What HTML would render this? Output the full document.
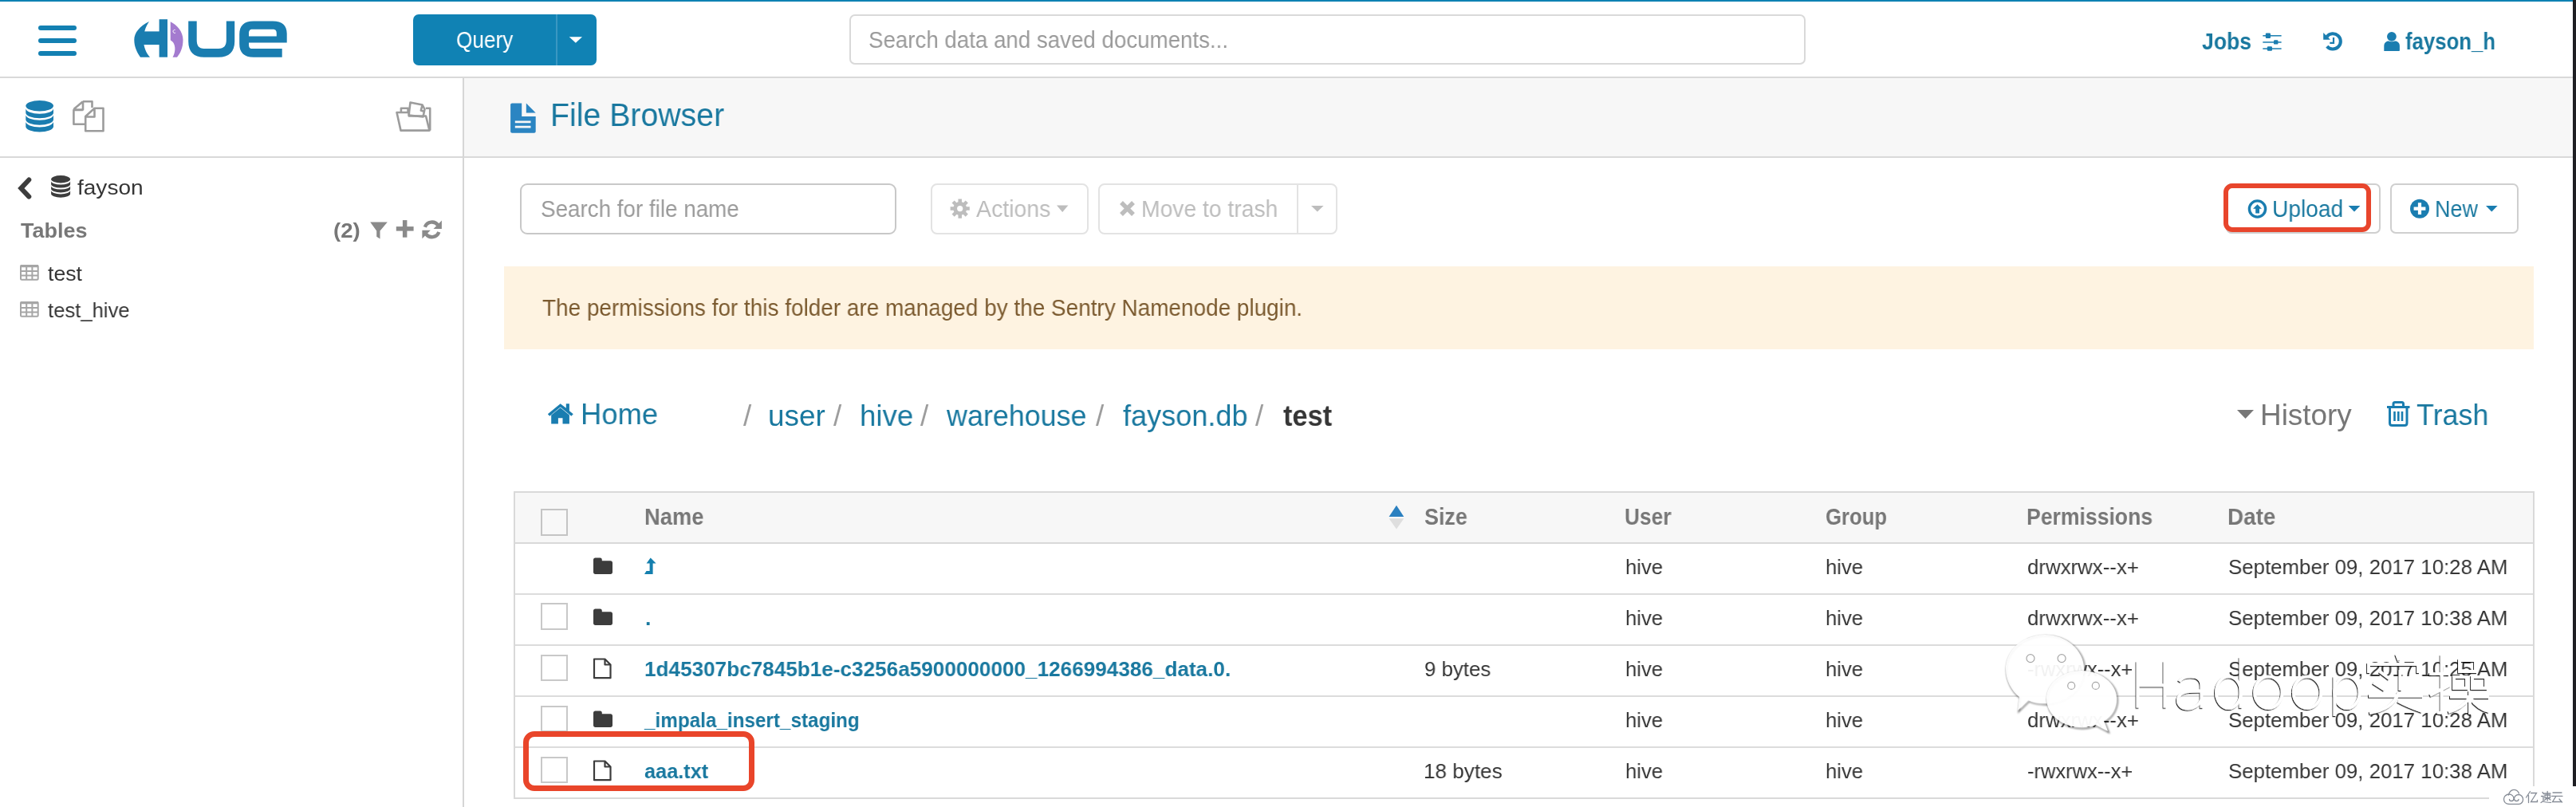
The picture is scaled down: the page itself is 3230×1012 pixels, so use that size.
<!DOCTYPE html>
<html><head><meta charset="utf-8">
<style>
html,body{margin:0;padding:0;width:3230px;height:1012px;overflow:hidden;background:#fff;font-family:"Liberation Sans",sans-serif;}
.a{position:absolute;box-sizing:border-box;}
.t{position:absolute;line-height:60px;height:60px;white-space:pre;transform-origin:0 0;will-change:transform;}
svg{position:absolute;overflow:visible;}
</style></head><body>
<!-- top blue line -->
<div class="a" style="left:0;top:0;width:3226px;height:2px;background:#0e82b3"></div>
<!-- header bottom border -->
<div class="a" style="left:0;top:96px;width:3226px;height:2px;background:#d9d9d9"></div>
<!-- hamburger -->
<div class="a" style="left:48px;top:32px;width:48px;height:6px;border-radius:3px;background:#1380b2"></div>
<div class="a" style="left:48px;top:48px;width:48px;height:6px;border-radius:3px;background:#1380b2"></div>
<div class="a" style="left:48px;top:64px;width:48px;height:6px;border-radius:3px;background:#1380b2"></div>
<!-- logo -->
<svg style="left:0;top:0" width="400" height="96" viewBox="0 0 400 96">
  <g fill="#1a7db0">
    <!-- H left crescent + bar + stem -->
    <path d="M187 27 C175 33 168.3 41 168.3 50 C168.3 59 172 66 176 71.7 L188 71.7 C183 66 180 59 180 50 C180 42 182 34 187 27 Z"/>
    <rect x="180" y="39.4" width="22" height="16.7"/>
    <rect x="199.6" y="24.2" width="10.4" height="47.5"/>
    <!-- U -->
    <path d="M236.2 26.4 H246.7 V50 C246.7 57 249 61 256 61 H274 C281 61 283.8 57 283.8 50 V26.4 H294.2 V52 C294.2 65 287 71.7 274 71.7 H256 C243 71.7 236.2 65 236.2 52 Z"/>
    <!-- e -->
    <path d="M318 26.4 H342 C354 26.4 359.7 32 359.7 42 V53.6 H312 V56 C312 59 313 61 316 61 H353.7 V71.7 H318 C306 71.7 300.2 66 300.2 55 V43 C300.2 32 306 26.4 318 26.4 Z M316 36.8 C313 36.8 312 39 312 42 V45.5 H346.8 V42 C346.8 39 346 36.8 342 36.8 Z" fill-rule="evenodd"/>
  </g>
  <path fill="#a47bcf" d="M213.75 27.3 C222 31 229.5 40 229.5 50 C229.5 60 226 67 222 71.7 L216.5 71.7 C220 66 220.5 58 217 53 C215 51 213.75 50.5 213.75 49.9 Z"/>
  <path d="M219.6 37.5 a2 2 0 1 0 0.5 3.6" stroke="#fff" stroke-width="1" fill="none"/>
</svg>
<!-- Query button -->
<div class="a" style="left:518px;top:18px;width:230px;height:64px;border-radius:7px;background:#1082b4"></div>
<div class="a" style="left:697px;top:18px;width:2px;height:64px;background:#3a97c2"></div>
<svg style="left:0;top:0" width="1" height="1"><path d="M713.7 46.2 H730 L721.85 53.8 Z" fill="#fff"/></svg>
<!-- global search -->
<div class="a" style="left:1065px;top:18px;width:1199px;height:63px;border:2px solid #d9d9d9;border-radius:7px;background:#fff"></div>
<!-- jobs sliders icon -->
<svg style="left:0;top:0" width="1" height="1" fill="#1a7db0">
  <rect x="2837.3" y="44.05" width="23.3" height="1.5"/><rect x="2840.8" y="41.6" width="6.2" height="6.3" rx="1.2"/>
  <rect x="2837.3" y="52.2" width="23.3" height="1.5"/><rect x="2851" y="50.2" width="5.4" height="5.4" rx="1.2"/>
  <rect x="2837.3" y="60.3" width="23.3" height="1.5"/><rect x="2842.8" y="58.3" width="6.2" height="5.5" rx="1.2"/>
</svg>
<!-- history icon -->
<svg style="left:0;top:0" width="1" height="1">
  <path d="M2917.6 45.9 A9.65 9.65 0 1 1 2917.8 58.1" stroke="#1a7db0" stroke-width="4.1" fill="none"/>
  <path d="M2913.2 41.1 L2913.2 49.8 L2922 49.8 Z" fill="#1a7db0"/>
  <path d="M2926 47.1 V53.9 H2921.3" stroke="#1a7db0" stroke-width="2.2" fill="none"/>
</svg>
<!-- user icon -->
<svg style="left:0;top:0" width="1" height="1" fill="#1a7db0">
  <path d="M2989.3 63.9 V57.5 C2989.3 53.8 2992 51.4 2995 51.4 H3003.2 C3006.2 51.4 3008.9 53.8 3008.9 57.5 V62.9 C3008.9 63.5 3008.5 63.9 3008 63.9 Z"/>
  <circle cx="2998.9" cy="45.8" r="6.5" fill="#fff"/>
  <circle cx="2998.9" cy="45.8" r="5.9"/>
</svg>

<!-- sidebar -->
<div class="a" style="left:580px;top:98px;width:2px;height:914px;background:#d6d6d6"></div>
<div class="a" style="left:0;top:196px;width:580px;height:2px;background:#d9d9d9"></div>
<!-- db icon blue -->
<svg style="left:0;top:0" width="1" height="1" fill="#1a7db0">
<ellipse cx="49.65" cy="132.70000000000002" rx="17.35" ry="6.8"/>
<path d="M32.3 136 A17.35 6.8 0 0 0 67 136 V141.4 A17.35 6.8 0 0 1 32.3 141.4 Z"/>
<path d="M32.3 144 A17.35 6.8 0 0 0 67 144 V150 A17.35 6.8 0 0 1 32.3 150 Z"/>
<path d="M32.3 152.6 A17.35 6.8 0 0 0 67 152.6 V158.7 A17.35 6.8 0 0 1 32.3 158.7 Z"/>
</svg>
<!-- copy icon gray -->
<svg style="left:0;top:0" width="1" height="1" fill="none" stroke="#9c9c9c" stroke-width="2.6" stroke-linejoin="round">
  <path d="M104 127.2 H115.5 V135 M103.8 138 L92.4 138 V155.8 H106 M104 127.2 L92.4 137 M104 127.2 V137.5 H92.4"/>
  <path d="M118.5 135.8 H129.5 V164.2 H107.2 V146 L118.5 135.8 Z M118.5 135.8 V146.5 H107.2"/>
</svg>
<!-- folder-open icon gray -->
<svg style="left:0;top:0" width="1" height="1" fill="none" stroke="#9c9c9c" stroke-width="2.6" stroke-linejoin="round">
  <path d="M512.8 142.3 L514.5 128.5 L529.6 131.5 L532.5 137 L530.5 146.5 L512.8 144.5 Z"/>
  <path d="M529.6 131.5 L527.8 138.5 L532.5 140"/>
  <path d="M502.9 140.5 V135.7 H511.6 V140.5"/>
  <path d="M497.5 141 H512.8 V145.5 H534 L538.5 163.6 H502.5 Z"/>
  <path d="M533.8 135.7 H539.2 V163.6"/>
</svg>

<!-- sidebar content -->
<svg style="left:0;top:0" width="1" height="1">
  <path d="M36.3 225.5 L26.3 236.1 L36.3 246.6" stroke="#3d3d3d" stroke-width="6" fill="none" stroke-linejoin="miter" stroke-linecap="round"/>
</svg>
<svg style="left:0;top:0" width="1" height="1" fill="#3d3d3d">
<ellipse cx="76.1" cy="224.7" rx="12.0" ry="4.7"/>
<path d="M64.1 226.9 A12.0 4.7 0 0 0 88.1 226.9 V230.9 A12.0 4.7 0 0 1 64.1 230.9 Z"/>
<path d="M64.1 232.9 A12.0 4.7 0 0 0 88.1 232.9 V236.8 A12.0 4.7 0 0 1 64.1 236.8 Z"/>
<path d="M64.1 238.8 A12.0 4.7 0 0 0 88.1 238.8 V243 A12.0 4.7 0 0 1 64.1 243 Z"/>
</svg>
<!-- filter plus refresh -->
<svg style="left:0;top:0" width="1" height="1" fill="#8a8a8a">
  <path d="M464.2 278.5 H485.8 L476.5 289.5 V299.6 L472.2 296.8 V289.5 Z"/>
  <rect x="496.8" y="284.1" width="21.8" height="5.5"/><rect x="504.9" y="276.1" width="5.5" height="21.6"/>
</svg>
<svg style="left:0;top:0" width="1" height="1" fill="none" stroke="#8a8a8a" stroke-width="4.4">
  <path d="M532.86 284.72 A9.3 9.3 0 0 1 549.22 282.57"/>
  <path d="M550.34 291.08 A9.3 9.3 0 0 1 533.98 293.23"/>
  <path d="M553.9 276.6 V287 H543.5 Z" fill="#8a8a8a" stroke="none"/>
  <path d="M529.4 299.3 V288.8 H539.8 Z" fill="#8a8a8a" stroke="none"/>
</svg>
<!-- table icons -->
<svg style="left:0;top:0" width="1" height="1" fill="none" stroke="#a6a6a6" stroke-width="2">
  <rect x="26" y="333" width="21.7" height="17.8" rx="1.5"/>
  <path d="M26 339.9 H47.7 M26 345.4 H47.7 M33.2 334 V350.8 M40.4 334 V350.8"/>
  <rect x="25.5" y="332" width="22.7" height="3.2" fill="#a6a6a6" stroke="none" rx="1"/>
  <rect x="26" y="379" width="21.7" height="17.8" rx="1.5"/>
  <path d="M26 385.9 H47.7 M26 391.4 H47.7 M33.2 380 V396.8 M40.4 380 V396.8"/>
  <rect x="25.5" y="378" width="22.7" height="3.2" fill="#a6a6a6" stroke="none" rx="1"/>
</svg>
<!-- main panel header -->
<div class="a" style="left:582px;top:98px;width:2644px;height:98px;background:#f7f7f7"></div>
<div class="a" style="left:582px;top:196px;width:2644px;height:2px;background:#d9d9d9"></div>
<svg style="left:0;top:0" width="1" height="1" fill="#2b85c2">
  <path d="M642.1 129.6 H654.2 V145.9 H671.7 V164.7 C671.7 165.9 670.9 166.7 669.7 166.7 H642.1 C640.9 166.7 640.1 165.9 640.1 164.7 V131.6 C640.1 130.4 640.9 129.6 642.1 129.6 Z M645.8 151.5 V154.3 H665.5 V151.5 Z M645.8 157.7 V160.5 H665.5 V157.7 Z" fill-rule="evenodd"/>
  <path d="M659.8 129.6 L671.7 141.4 H659.8 Z"/>
</svg>

<!-- toolbar -->
<div class="a" style="left:652px;top:230px;width:472px;height:64px;border:2px solid #c8c8c8;border-radius:9px;background:#fff"></div>
<div class="a" style="left:1167px;top:230px;width:198px;height:64px;border:2px solid #e3e3e3;border-radius:8px;background:#fff"></div>
<svg style="left:0;top:0" width="1" height="1" fill="#bdbdbd">
  <circle cx="1203.7" cy="261.6" r="8.5"/>
  <g stroke="#bdbdbd" stroke-width="4.5">
    <path d="M1203.7 249.5 V273.7 M1191.6 261.6 H1215.8 M1195.1 253 L1212.3 270.2 M1212.3 253 L1195.1 270.2"/>
  </g>
  <circle cx="1203.7" cy="261.6" r="3.6" fill="#fff"/>
  <path d="M1325 257.4 H1339.4 L1332.2 266 Z"/>
</svg>
<div class="a" style="left:1377px;top:230px;width:300px;height:64px;border:2px solid #e3e3e3;border-radius:8px;background:#fff"></div>
<div class="a" style="left:1625.5px;top:230px;width:2px;height:64px;background:#e3e3e3"></div>
<svg style="left:0;top:0" width="1" height="1" fill="#bdbdbd">
  <path d="M1406 254 L1421 269 M1421 254 L1406 269" stroke="#bdbdbd" stroke-width="5.5"/>
  <path d="M1644 258 H1659.6 L1651.8 265.5 Z"/>
</svg>
<!-- upload & new -->
<div class="a" style="left:2791px;top:230px;width:194px;height:63px;border:2px solid #cfcfcf;border-radius:7px;background:#fff"></div>
<div class="a" style="left:2997px;top:230px;width:161px;height:63px;border:2px solid #cfcfcf;border-radius:7px;background:#fff"></div>
<svg style="left:0;top:0" width="1" height="1">
  <circle cx="2830.5" cy="262" r="10.1" fill="none" stroke="#1a7db0" stroke-width="3.4"/>
  <path d="M2830.5 256.2 L2836 261.7 H2833 V267.6 H2828.2 V261.7 H2825 Z" fill="#1a7db0"/>
  <path d="M2944.6 258 H2959.4 L2952 265.5 Z" fill="#1a7db0"/>
  <circle cx="3034" cy="261.7" r="12" fill="#1a7db0"/>
  <path d="M3034 254.3 V269.1 M3026.6 261.7 H3041.4" stroke="#fff" stroke-width="4.2"/>
  <path d="M3117 258 H3131.6 L3124.3 265.5 Z" fill="#1a7db0"/>
</svg>
<div class="a" style="left:2788px;top:230px;width:185px;height:60.5px;border:6px solid #e8452c;border-radius:11px"></div>

<!-- banner -->
<div class="a" style="left:632px;top:334px;width:2545px;height:104px;background:#fef3e1"></div>

<!-- breadcrumb icons -->
<svg style="left:0;top:0" width="1" height="1" fill="#1a7db0">
  <path d="M702.7 506.2 L686.8 519.3 L689.2 521.8 L702.7 510.6 L716.3 521.8 L718.8 519.3 L713.9 515.2 V506.2 H709.8 V511.8 Z"/>
  <path d="M691.2 520.6 L702.7 511.3 L713.9 520.6 V531.6 H705.5 V524.2 H699.9 V531.6 H691.2 Z"/>
</svg>
<svg style="left:0;top:0" width="1" height="1" fill="#777">
  <path d="M2805 514 H2826 L2815.5 525 Z"/>
</svg>
<svg style="left:0;top:0" width="1" height="1" fill="none" stroke="#1a7db0" stroke-width="3">
  <path d="M2993 510.5 H3021.5"/>
  <path d="M3001 510 V506.5 C3001 505 3002 504.5 3003 504.5 H3011.5 C3012.5 504.5 3013.5 505 3013.5 506.5 V510"/>
  <path d="M2996.5 511 V530.5 C2996.5 532.5 2997.5 533.5 2999.5 533.5 H3015 C3017 533.5 3018 532.5 3018 530.5 V511"/>
  <path d="M3002.5 516 V528 M3007.3 516 V528 M3012 516 V528" stroke-width="2.6"/>
</svg>

<!-- table -->
<div class="a" style="left:644px;top:616px;width:2534px;height:386px;border:2px solid #d9d9d9;background:#fff"></div>
<div class="a" style="left:646px;top:618px;width:2530px;height:62px;background:#f7f7f7"></div>
<div class="a" style="left:646px;top:680px;width:2530px;height:2px;background:#d9d9d9"></div>
<div class="a" style="left:646px;top:744px;width:2530px;height:2px;background:#dcdcdc"></div>
<div class="a" style="left:646px;top:808px;width:2530px;height:2px;background:#dcdcdc"></div>
<div class="a" style="left:646px;top:872px;width:2530px;height:2px;background:#dcdcdc"></div>
<div class="a" style="left:646px;top:936px;width:2530px;height:2px;background:#dcdcdc"></div>
<!-- checkboxes -->
<div class="a" style="left:678px;top:638px;width:34px;height:34px;border:2px solid #c4c4c4;background:#f8f8f8"></div>
<div class="a" style="left:678px;top:756px;width:34px;height:33.5px;border:2px solid #c8c8c8;background:#fff"></div>
<div class="a" style="left:678px;top:820.5px;width:34px;height:33.5px;border:2px solid #c8c8c8;background:#fff"></div>
<div class="a" style="left:678px;top:884.5px;width:34px;height:33.5px;border:2px solid #c8c8c8;background:#fff"></div>
<div class="a" style="left:678px;top:948.5px;width:34px;height:33.5px;border:2px solid #c8c8c8;background:#fff"></div>
<!-- sort icon -->
<svg style="left:0;top:0" width="1" height="1">
  <path d="M1741.6 648 L1751 633.7 L1760.3 648 Z" fill="#2b80c0"/>
  <path d="M1741.6 650.3 L1760.3 650.3 L1751 663.5 Z" fill="#dedede"/>
</svg>
<!-- row icons -->
<svg style="left:0;top:0" width="1" height="1" fill="#3c3c3c">
  <path id="fold" d="M746.5 699.6 H752.5 C754 699.6 754.8 700.5 754.8 702 V703.3 H765.5 C767 703.3 768 704.3 768 705.8 V717.5 C768 719 767 720 765.5 720 H746.5 C745 720 744 719 744 717.5 V702 C744 700.5 745 699.6 746.5 699.6 Z"/>
  <use href="#fold" y="64"/>
  <use href="#fold" y="192"/>
</svg>
<svg style="left:0;top:0" width="1" height="1">
  <path d="M815.7 699.6 L822.6 706.5 H818.6 V720 H808 L810.5 716 H814.6 V706.5 H810.6 Z" fill="#147fae"/>
</svg>
<svg style="left:0;top:0" width="1" height="1" fill="none" stroke="#3c3c3c" stroke-width="2.2" stroke-linejoin="round">
  <path id="file" d="M745 826.5 H758.5 L765.5 833.5 V850.2 H745 Z M758.5 826.5 V833.5 H765.5"/>
  <use href="#file" y="128"/>
</svg>
<!-- red annotation around aaa.txt -->
<div class="a" style="left:655.5px;top:917px;width:290.5px;height:74.5px;border:7px solid #e9452a;border-radius:14px"></div>

<div class="t" style="left:572.09px;top:20.06px;font-size:28.7px;font-weight:400;color:#ffffff;transform:scaleX(0.9130);">Query</div>
<div class="t" style="left:1088.93px;top:20.06px;font-size:28.7px;font-weight:400;color:#9a9a9a;transform:scaleX(0.9653);">Search data and saved documents...</div>
<div class="t" style="left:2761.07px;top:21.76px;font-size:28.7px;font-weight:700;color:#19789f;transform:scaleX(0.9262);">Jobs</div>
<div class="t" style="left:3016.30px;top:21.56px;font-size:28.7px;font-weight:700;color:#19789f;transform:scaleX(0.8968);">fayson_h</div>
<div class="t" style="left:96.80px;top:204.77px;font-size:26.65px;font-weight:400;color:#363636;transform:scaleX(1.0519);">fayson</div>
<div class="t" style="left:26.00px;top:259.07px;font-size:26.65px;font-weight:700;color:#777777;transform:scaleX(1.0123);">Tables</div>
<div class="t" style="left:417.97px;top:259.27px;font-size:26.65px;font-weight:700;color:#777777;transform:scaleX(1.0323);">(2)</div>
<div class="t" style="left:60.10px;top:313.07px;font-size:26.65px;font-weight:400;color:#363636;transform:scaleX(0.9977);">test</div>
<div class="t" style="left:60.00px;top:359.07px;font-size:26.65px;font-weight:400;color:#363636;transform:scaleX(0.9623);">test_hive</div>
<div class="t" style="left:690.13px;top:113.89px;font-size:41.0px;font-weight:400;color:#19789f;transform:scaleX(0.9576);">File Browser</div>
<div class="t" style="left:678.23px;top:232.06px;font-size:28.7px;font-weight:400;color:#9a9a9a;transform:scaleX(0.9690);">Search for file name</div>
<div class="t" style="left:1223.70px;top:232.06px;font-size:28.7px;font-weight:400;color:#bdbdbd;transform:scaleX(0.9925);">Actions</div>
<div class="t" style="left:1430.93px;top:232.06px;font-size:28.7px;font-weight:400;color:#bdbdbd;transform:scaleX(0.9859);">Move to trash</div>
<div class="t" style="left:2848.74px;top:232.06px;font-size:28.7px;font-weight:400;color:#19789f;transform:scaleX(0.9805);">Upload</div>
<div class="t" style="left:3053.12px;top:232.06px;font-size:28.7px;font-weight:400;color:#19789f;transform:scaleX(0.9393);">New</div>
<div class="t" style="left:679.93px;top:356.46px;font-size:28.7px;font-weight:400;color:#7b5a2f;transform:scaleX(0.9735);">The permissions for this folder are managed by the Sentry Namenode plugin.</div>
<div class="t" style="left:728.24px;top:489.91px;font-size:36.9px;font-weight:400;color:#19789f;transform:scaleX(0.9851);">Home</div>
<div class="t" style="left:932.00px;top:492.41px;font-size:36.9px;font-weight:400;color:#9d9d9d;transform:scaleX(1.0000);">/</div>
<div class="t" style="left:1045.00px;top:492.41px;font-size:36.9px;font-weight:400;color:#9d9d9d;transform:scaleX(1.0000);">/</div>
<div class="t" style="left:1154.00px;top:492.41px;font-size:36.9px;font-weight:400;color:#9d9d9d;transform:scaleX(1.0000);">/</div>
<div class="t" style="left:1373.70px;top:492.41px;font-size:36.9px;font-weight:400;color:#9d9d9d;transform:scaleX(1.0000);">/</div>
<div class="t" style="left:1574.00px;top:492.41px;font-size:36.9px;font-weight:400;color:#9d9d9d;transform:scaleX(1.0000);">/</div>
<div class="t" style="left:963.00px;top:492.41px;font-size:36.9px;font-weight:400;color:#19789f;transform:scaleX(1.0000);">user</div>
<div class="t" style="left:1077.52px;top:492.41px;font-size:36.9px;font-weight:400;color:#19789f;transform:scaleX(0.9922);">hive</div>
<div class="t" style="left:1187.00px;top:492.41px;font-size:36.9px;font-weight:400;color:#19789f;transform:scaleX(0.9721);">warehouse</div>
<div class="t" style="left:1407.50px;top:492.41px;font-size:36.9px;font-weight:400;color:#19789f;transform:scaleX(0.9780);">fayson.db</div>
<div class="t" style="left:1609.00px;top:492.41px;font-size:36.9px;font-weight:700;color:#363636;transform:scaleX(0.9323);">test</div>
<div class="t" style="left:2833.61px;top:490.71px;font-size:36.9px;font-weight:400;color:#777777;transform:scaleX(0.9982);">History</div>
<div class="t" style="left:3030.03px;top:490.71px;font-size:36.9px;font-weight:400;color:#19789f;transform:scaleX(0.9711);">Trash</div>
<div class="t" style="left:807.90px;top:618.26px;font-size:28.7px;font-weight:700;color:#777777;transform:scaleX(0.9520);">Name</div>
<div class="t" style="left:1785.76px;top:618.26px;font-size:28.7px;font-weight:700;color:#777777;transform:scaleX(0.9375);">Size</div>
<div class="t" style="left:2037.17px;top:618.26px;font-size:28.7px;font-weight:700;color:#777777;transform:scaleX(0.9145);">User</div>
<div class="t" style="left:2289.10px;top:618.26px;font-size:28.7px;font-weight:700;color:#777777;transform:scaleX(0.8952);">Group</div>
<div class="t" style="left:2541.15px;top:618.26px;font-size:28.7px;font-weight:700;color:#777777;transform:scaleX(0.9262);">Permissions</div>
<div class="t" style="left:2792.66px;top:618.26px;font-size:28.7px;font-weight:700;color:#777777;transform:scaleX(0.9695);">Date</div>
<div class="t" style="left:2037.97px;top:680.97px;font-size:26.65px;font-weight:400;color:#363636;transform:scaleX(0.9630);">hive</div>
<div class="t" style="left:2289.27px;top:680.97px;font-size:26.65px;font-weight:400;color:#363636;transform:scaleX(0.9630);">hive</div>
<div class="t" style="left:2542.03px;top:680.97px;font-size:26.65px;font-weight:400;color:#363636;transform:scaleX(0.9697);">drwxrwx--x+</div>
<div class="t" style="left:2793.63px;top:680.97px;font-size:26.65px;font-weight:400;color:#363636;transform:scaleX(0.9696);">September 09, 2017 10:28 AM</div>
<div class="t" style="left:2037.97px;top:744.97px;font-size:26.65px;font-weight:400;color:#363636;transform:scaleX(0.9630);">hive</div>
<div class="t" style="left:2289.27px;top:744.97px;font-size:26.65px;font-weight:400;color:#363636;transform:scaleX(0.9630);">hive</div>
<div class="t" style="left:2542.03px;top:744.97px;font-size:26.65px;font-weight:400;color:#363636;transform:scaleX(0.9697);">drwxrwx--x+</div>
<div class="t" style="left:2793.63px;top:744.97px;font-size:26.65px;font-weight:400;color:#363636;transform:scaleX(0.9696);">September 09, 2017 10:38 AM</div>
<div class="t" style="left:2037.97px;top:808.97px;font-size:26.65px;font-weight:400;color:#363636;transform:scaleX(0.9630);">hive</div>
<div class="t" style="left:2289.27px;top:808.97px;font-size:26.65px;font-weight:400;color:#363636;transform:scaleX(0.9630);">hive</div>
<div class="t" style="left:2542.04px;top:808.97px;font-size:26.65px;font-weight:400;color:#363636;transform:scaleX(0.9559);">-rwxrwx--x+</div>
<div class="t" style="left:2793.63px;top:808.97px;font-size:26.65px;font-weight:400;color:#363636;transform:scaleX(0.9696);">September 09, 2017 10:25 AM</div>
<div class="t" style="left:2037.97px;top:872.97px;font-size:26.65px;font-weight:400;color:#363636;transform:scaleX(0.9630);">hive</div>
<div class="t" style="left:2289.27px;top:872.97px;font-size:26.65px;font-weight:400;color:#363636;transform:scaleX(0.9630);">hive</div>
<div class="t" style="left:2542.03px;top:872.97px;font-size:26.65px;font-weight:400;color:#363636;transform:scaleX(0.9697);">drwxrwx--x+</div>
<div class="t" style="left:2793.63px;top:872.97px;font-size:26.65px;font-weight:400;color:#363636;transform:scaleX(0.9696);">September 09, 2017 10:28 AM</div>
<div class="t" style="left:2037.97px;top:936.97px;font-size:26.65px;font-weight:400;color:#363636;transform:scaleX(0.9630);">hive</div>
<div class="t" style="left:2289.27px;top:936.97px;font-size:26.65px;font-weight:400;color:#363636;transform:scaleX(0.9630);">hive</div>
<div class="t" style="left:2542.04px;top:936.97px;font-size:26.65px;font-weight:400;color:#363636;transform:scaleX(0.9559);">-rwxrwx--x+</div>
<div class="t" style="left:2793.63px;top:936.97px;font-size:26.65px;font-weight:400;color:#363636;transform:scaleX(0.9696);">September 09, 2017 10:38 AM</div>
<div class="t" style="left:809.00px;top:744.97px;font-size:26.65px;font-weight:700;color:#19789f;transform:scaleX(1.0000);">.</div>
<div class="t" style="left:808.04px;top:808.97px;font-size:26.65px;font-weight:700;color:#19789f;transform:scaleX(0.9808);">1d45307bc7845b1e-c3256a5900000000_1266994386_data.0.</div>
<div class="t" style="left:808.00px;top:872.97px;font-size:26.65px;font-weight:700;color:#19789f;transform:scaleX(0.9109);">_impala_insert_staging</div>
<div class="t" style="left:807.65px;top:936.97px;font-size:26.65px;font-weight:700;color:#19789f;transform:scaleX(0.9494);">aaa.txt</div>
<div class="t" style="left:1786.03px;top:808.97px;font-size:26.65px;font-weight:400;color:#363636;transform:scaleX(0.9702);">9 bytes</div>
<div class="t" style="left:1785.04px;top:936.97px;font-size:26.65px;font-weight:400;color:#363636;transform:scaleX(0.9796);">18 bytes</div>


<!-- watermark -->
<svg style="left:0;top:0" width="3230" height="1012" viewBox="0 0 3230 1012">
  <defs>
    <filter id="sh" x="-20%" y="-20%" width="140%" height="140%">
      <feDropShadow dx="-1" dy="1.2" stdDeviation="0.6" flood-color="#000" flood-opacity="0.85"/>
    </filter>
    <filter id="sh2" x="-20%" y="-20%" width="140%" height="140%">
      <feDropShadow dx="1" dy="1.5" stdDeviation="1.2" flood-color="#000" flood-opacity="0.7"/>
    </filter>
  </defs>
  <filter id="bl"><feGaussianBlur stdDeviation="1"/></filter>
  <path d="M2564 796 C2591 796 2613 815 2613 839 C2613 863 2591 882 2564 882 C2556 882 2549 881 2543 878 L2530 891 L2532 874 C2522 866 2515 853 2515 839 C2515 815 2537 796 2564 796 Z" transform="translate(1.2 1.6)" fill="none" stroke="#000" stroke-opacity="0.55" stroke-width="1.6" filter="url(#bl)"/>
  <path d="M2564 796 C2591 796 2613 815 2613 839 C2613 863 2591 882 2564 882 C2556 882 2549 881 2543 878 L2530 891 L2532 874 C2522 866 2515 853 2515 839 C2515 815 2537 796 2564 796 Z" fill="#fff" fill-opacity="0.93"/>
  <g fill="#fff" stroke="#000" stroke-opacity="0.35" stroke-width="1.2">
    <circle cx="2546" cy="825.6" r="5"/><circle cx="2585.1" cy="825.6" r="5"/>
  </g>
  <path d="M2610 841 C2634 841 2654 857 2654 876 C2654 888 2648 898 2638 904 L2643 917 L2628 909 C2622 911 2616 912 2610 912 C2586 912 2566 896 2566 876 C2566 857 2586 841 2610 841 Z" transform="translate(1.2 1.6)" fill="none" stroke="#000" stroke-opacity="0.55" stroke-width="1.6" filter="url(#bl)"/>
  <path d="M2610 841 C2634 841 2654 857 2654 876 C2654 888 2648 898 2638 904 L2643 917 L2628 909 C2622 911 2616 912 2610 912 C2586 912 2566 896 2566 876 C2566 857 2586 841 2610 841 Z" fill="#fff" fill-opacity="0.96"/>
  <g fill="#fff" stroke="#000" stroke-opacity="0.35" stroke-width="1.2">
    <circle cx="2597.2" cy="859.9" r="4.5"/><circle cx="2627.8" cy="859.9" r="4.5"/>
  </g>
  <g filter="url(#sh)" fill="none" stroke="#fff" stroke-width="3.8" stroke-linecap="butt">
    <!-- H -->
    <path d="M2680.5 829.2 V887.5 M2714.5 829.2 V887.5 M2680.5 859.3 H2714.5"/>
    <!-- a -->
    <path d="M2732.5 854.5 C2735.5 850 2741 848.4 2747 848.4 C2755.5 848.4 2760.5 853 2760.5 860 V887.8"/>
    <path d="M2760.5 866.5 C2753 866.5 2747 866.5 2742 867.5 C2734.5 869 2731 872.5 2731 878 C2731 884.5 2736 888.5 2743.5 888.5 C2751.5 888.5 2757.5 883.5 2760.5 877.5"/>
    <!-- d -->
    <ellipse cx="2794.5" cy="868.2" rx="15.5" ry="19.85"/>
    <path d="M2809.5 824.1 V887.8"/>
    <!-- o o -->
    <ellipse cx="2844.4" cy="868.2" rx="17.3" ry="19.85"/>
    <ellipse cx="2893.1" cy="868.2" rx="17.3" ry="19.85"/>
    <!-- p -->
    <path d="M2927.4 848.4 V898"/>
    <ellipse cx="2943" cy="868.2" rx="15.7" ry="19.85"/>
    <!-- 实 -->
    <path d="M3005 820 L3008 828"/>
    <path d="M2970 844 V833 H3032 V844"/>
    <path d="M2984 842 L2996 851 M2976 856 L2990 865"/>
    <path d="M3009.5 840 V866"/>
    <path d="M2970 872.5 H3038"/>
    <path d="M3008 868 C3002 884 2990 891 2971 894"/>
    <path d="M3007 879 C3016 884 3026 888 3037 892"/>
    <!-- 操 -->
    <path d="M3046 845 H3071"/>
    <path d="M3061.6 821 V891 C3061.6 894 3059 895 3056 893"/>
    <path d="M3047 872 L3072 859"/>
    <path d="M3084 828 H3104 V842 H3084 Z"/>
    <path d="M3077 849 H3093 V863 H3077 Z M3100 849 H3117 V863 H3100 Z"/>
    <path d="M3072 874 H3121"/>
    <path d="M3097 866 V896"/>
    <path d="M3096 876 C3090 884 3080 890 3070 893 M3098 876 C3104 884 3112 890 3121 892"/>
  </g>
</svg>
<!-- bottom-right logo -->
<div class="a" style="left:3121px;top:986px;width:109px;height:26px;background:#fff"></div>
<svg style="left:0;top:0" width="1" height="1" fill="none" stroke="#868c96" stroke-width="1.3" stroke-linecap="round">
  <path d="M3145.5 997 C3146 993 3149 990.4 3152 990.4 C3155 990.4 3157.5 992.5 3158.5 995"/>
  <path d="M3146 1008.3 C3142 1008.3 3139.5 1005.5 3139.5 1002 C3139.5 998.5 3142.5 996 3146 996 C3149.5 996 3152 998.5 3152 1001.5 C3152 1003.5 3150.5 1004.5 3149 1004.5 C3147.5 1004.5 3146.5 1003.5 3146.5 1002.5"/>
  <path d="M3146 1008.3 H3158.5 C3161.5 1008.3 3163.6 1005.5 3163.6 1002.5 C3163.6 999 3161 996.5 3158 996.5 C3155 996.5 3152.5 999 3152.5 1001.5 C3152.5 1003.5 3154 1004.5 3155.5 1004.5 C3157 1004.5 3158 1003.5 3158 1002.5"/>
  <path d="M3172.5 992.5 L3167.5 1000 M3170.5 997.5 V1006.5 M3173.5 994.5 H3180.5 L3173.5 1005.5 H3181.5 V1003.5"/>
  <path d="M3188 993.5 L3189.5 995.5 M3186.5 998.5 H3189 V1004.5 L3186 1006.5 M3188.5 1005 C3191 1006 3194 1006.3 3198.5 1006.3 M3190.5 995 H3198 M3194.2 992.5 V1004 M3191 997 H3197.5 V1000.5 H3191 Z M3194 1000.5 L3190.5 1003.5 M3194.5 1000.5 L3198 1003"/>
  <path d="M3201 994 H3212 M3199.5 998.3 H3213 M3205 998.3 L3200.5 1005.5 H3211.5 M3209 1002 L3212.5 1006"/>
</svg>

<!-- right dark bar -->
<div class="a" style="left:3226px;top:0;width:4px;height:986px;background:#1f1f23"></div>
</body></html>
